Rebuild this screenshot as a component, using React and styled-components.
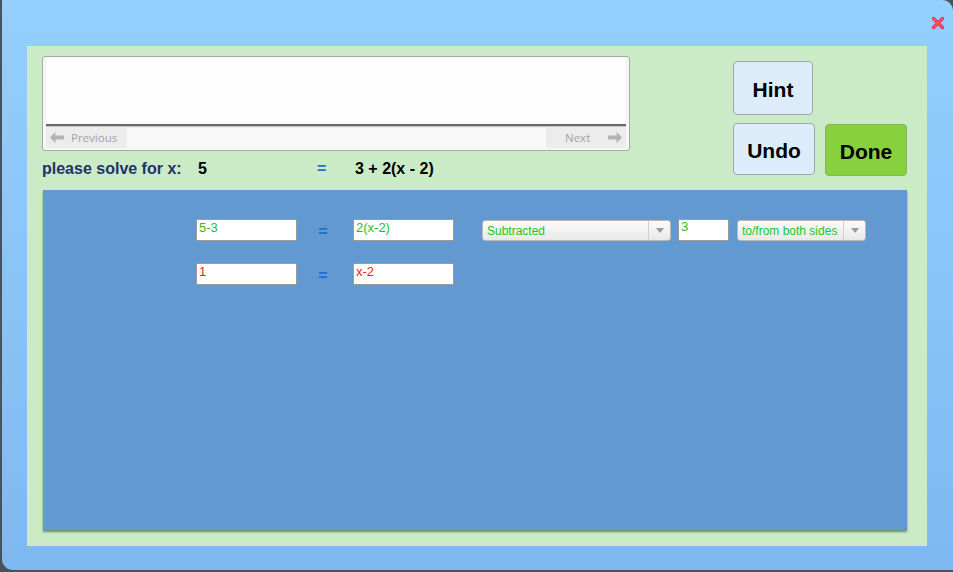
import React from "react"
import styled, { createGlobalStyle } from "styled-components"

const GlobalStyle = createGlobalStyle`
  html, body {
    margin: 0;
    padding: 0;
    background: #4b5157;
    font-family: "Liberation Sans", Arial, sans-serif;
  }
`

const steps = [
  { left: "5-3", right: "2(x-2)", color: "#1ec31e", action: "Subtracted", amount: "3", scope: "to/from both sides" },
  { left: "1", right: "x-2", color: "#f01c1c" },
]

const CloseIcon = () => (
  <svg width="14" height="14" viewBox="0 0 14 14">
    <path d="M2.5 2.5 L11.5 11.5 M11.5 2.5 L2.5 11.5" stroke="#f0284e" strokeWidth="3.2" strokeLinecap="round" />
    <path d="M2.5 2.5 L11.5 11.5 M11.5 2.5 L2.5 11.5" stroke="#ff5a78" strokeWidth="1.2" strokeLinecap="round" />
  </svg>
)

const Arrow = ({ dir }) => (
  <svg width="14" height="11" viewBox="0 0 14 11">
    <path
      d={dir === "left" ? "M0 5.5 L5.5 0 V3.5 H14 V7.5 H5.5 V11 Z" : "M14 5.5 L8.5 0 V3.5 H0 V7.5 H8.5 V11 Z"}
      fill="#b3b3b3"
    />
  </svg>
)

const Caret = () => (
  <svg width="8" height="5" viewBox="0 0 8 5">
    <path d="M0 0 H8 L4 5 Z" fill="#9a9a9a" />
  </svg>
)

const Select = ({ value, width }) => (
  <SelectBox $width={width}>
    <SelectText>{value}</SelectText>
    <SelectArrow><Caret /></SelectArrow>
  </SelectBox>
)

const App = () => (
  <>
    <GlobalStyle />
    <Dialog>
      <Header>
        <CloseButton><CloseIcon /></CloseButton>
      </Header>
      <Panel>
        <TopSection>
          <LeftColumn>
            <Slideshow>
              <SlideContent />
              <SlideNav>
                <NavButton><Arrow dir="left" />Previous</NavButton>
                <NavButton>Next<Arrow dir="right" /></NavButton>
              </SlideNav>
            </Slideshow>
            <Problem>
              <ProblemLabel>please solve for x:</ProblemLabel>
              <ProblemSide $width={119}>5</ProblemSide>
              <Equals $width={38}>=</Equals>
              <ProblemSide>3 + 2(x - 2)</ProblemSide>
            </Problem>
          </LeftColumn>
          <Buttons>
            <ActionButton $w={80} $h={54}>Hint</ActionButton>
            <span />
            <ActionButton $w={82} $h={52}>Undo</ActionButton>
            <ActionButton $w={82} $h={52} $primary>Done</ActionButton>
          </Buttons>
        </TopSection>
        <WorkArea>
          {steps.map((s, i) => (
            <StepRow key={i}>
              <ExprBox $color={s.color}>{s.left}</ExprBox>
              <StepEquals>=</StepEquals>
              <ExprBox $color={s.color}>{s.right}</ExprBox>
              {s.action && (
                <Controls>
                  <Select value={s.action} width={189} />
                  <AmountBox>{s.amount}</AmountBox>
                  <Select value={s.scope} width={129} />
                </Controls>
              )}
            </StepRow>
          ))}
        </WorkArea>
      </Panel>
    </Dialog>
  </>
)

export default App

const Dialog = styled.div`
  margin-left: 2px;
  width: 951px;
  height: 570px;
  background: linear-gradient(#93d0fe, #7db9f0);
  border-radius: 0 11px 0 11px;
  display: flex;
  flex-direction: column;
  box-sizing: border-box;
`

const Header = styled.div`
  height: 46px;
  display: flex;
  justify-content: flex-end;
  align-items: flex-start;
  padding: 16px 8px 0 0;
  box-sizing: border-box;
`

const CloseButton = styled.div`
  width: 14px;
  height: 14px;
  cursor: pointer;
`

const Panel = styled.div`
  margin: 0 26px 0 25px;
  height: 500px;
  background: #cbebc6;
  padding: 10px 20px 16px 15px;
  box-sizing: border-box;
  display: flex;
  flex-direction: column;
`

const TopSection = styled.div`
  height: 134px;
  display: flex;
  justify-content: space-between;
`

const LeftColumn = styled.div`
  width: 588px;
  display: flex;
  flex-direction: column;
`

const Slideshow = styled.div`
  height: 95px;
  border: 1px solid #a9a9a9;
  border-radius: 3px;
  background: #f8f8f8;
  padding: 2px 3px 2px 3px;
  box-sizing: border-box;
  display: flex;
  flex-direction: column;
`

const SlideContent = styled.div`
  height: 66px;
  background: #fdfdfd;
  border-bottom: 2px solid #6a6a6a;
  box-shadow: 0 1px 1px rgba(0, 0, 0, 0.2);
`

const SlideNav = styled.div`
  margin-top: 1px;
  height: 21px;
  display: flex;
  justify-content: space-between;
`

const NavButton = styled.div`
  width: 80px;
  height: 21px;
  background: #ececec;
  border-radius: 2px;
  display: flex;
  align-items: center;
  justify-content: space-between;
  padding: 0 4px;
  box-sizing: border-box;
  font-family: "Open Sans", "Liberation Sans", sans-serif;
  font-size: 11.5px;
  color: #a4a4a4;
  gap: 7px;

  &:first-child {
    justify-content: flex-start;
    width: 81px;
  }
  &:last-child {
    padding-left: 19px;
  }
`

const Problem = styled.div`
  display: flex;
  align-items: center;
  margin-top: 8px;
  height: 20px;
  font-size: 16px;
  font-weight: bold;
  color: #000;
`

const ProblemLabel = styled.div`
  width: 156px;
  color: #1e3366;
`

const ProblemSide = styled.div`
  width: ${(p) => (p.$width ? `${p.$width}px` : "auto")};
`

const Equals = styled.div`
  width: ${(p) => p.$width}px;
  color: #1a6ed8;
`

const Buttons = styled.div`
  display: grid;
  grid-template-columns: 82px 82px;
  column-gap: 10px;
  row-gap: 8px;
  align-content: start;
  padding-top: 5px;
`

const ActionButton = styled.div`
  width: ${(p) => p.$w}px;
  height: ${(p) => p.$h}px;
  box-sizing: border-box;
  border: 1px solid ${(p) => (p.$primary ? "#8cad6a" : "#a0a6ad")};
  border-radius: 4px;
  background: ${(p) => (p.$primary ? "#88d13e" : "#dcecfb")};
  display: flex;
  align-items: center;
  justify-content: center;
  padding-top: 3px;
  font-size: 21px;
  font-weight: bold;
  color: #000;
  ${(p) => p.$primary && "margin-top: 1px;"}
`

const WorkArea = styled.div`
  flex: 1;
  margin-left: 1px;
  background: #6299d0;
  box-shadow: 0 2px 2px rgba(40, 60, 40, 0.55);
  padding: 29px 0 0 153px;
  display: flex;
  flex-direction: column;
  gap: 22px;
`

const StepRow = styled.div`
  display: flex;
  align-items: center;
  height: 22px;
`

const ExprBox = styled.div`
  width: 101px;
  height: 22px;
  box-sizing: border-box;
  border: 1px solid #9a9a9a;
  background: #fff;
  color: ${(p) => p.$color};
  font-size: 13px;
  padding: 0 2px;
  line-height: 15px;
`

const StepEquals = styled.div`
  width: 56px;
  padding-right: 4px;
  box-sizing: border-box;
  text-align: center;
  color: #1a6ed8;
  font-size: 16px;
  font-weight: bold;
  line-height: 22px;
  margin-top: 3px;
`

const Controls = styled.div`
  display: flex;
  align-items: center;
  margin-left: 28px;
  gap: 7px;

  & > :last-child {
    margin-left: 1px;
  }
`

const SelectBox = styled.div`
  width: ${(p) => p.$width}px;
  height: 21px;
  box-sizing: border-box;
  border: 1px solid #b8b8b8;
  border-radius: 3px;
  background: linear-gradient(#fbfbfb, #e9e9e9);
  display: flex;
  align-items: center;
  margin-top: 1px;
`

const SelectText = styled.div`
  flex: 1;
  padding-left: 4px;
  font-size: 12px;
  color: #1ec31e;
`

const SelectArrow = styled.div`
  width: 21px;
  height: 100%;
  border-left: 1px solid #d0d0d0;
  display: flex;
  align-items: center;
  justify-content: center;
`

const AmountBox = styled.div`
  width: 51px;
  height: 22px;
  box-sizing: border-box;
  border: 1px solid #9a9a9a;
  background: #fff;
  color: #1ec31e;
  font-size: 13px;
  padding: 0 2px;
  line-height: 14px;
`
